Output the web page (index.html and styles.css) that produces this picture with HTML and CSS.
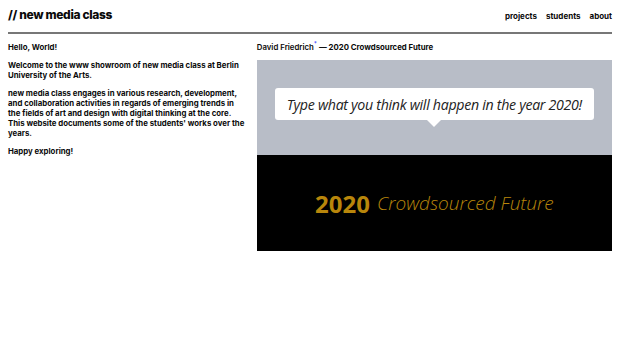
FILE: index.html
```html
<!DOCTYPE html>
<html lang="en">
<head>
  <meta charset="UTF-8" />
  <meta name="viewport" content="width=device-width, initial-scale=1.0"/>
  <title>new media class</title>
  <link rel="stylesheet" href="styles.css">
</head>
<body>
  <header class="site-header">
    <a class="logo" href="#">// new media class</a>
    <nav class="topnav" aria-label="Main menu">
      <a href="#">projects</a>
      <a href="#">students</a>
      <a href="#">about</a>
    </nav>
  </header>

  <main class="content">
    <section class="intro">
      <p>Hello, World!</p>
      <p>Welcome to the www showroom of new media class at Berlin University of the Arts.</p>
      <p>new media class engages in various research, development, and collaboration activities in regards of emerging trends in the fields of art and design with digital thinking at the core. This website documents some of the students' works over the years.</p>
      <p>Happy exploring!</p>
    </section>

    <section class="project">
      <p class="project-title">
        <span class="author">David Friedrich<sup>*</sup></span> — 2020 Crowdsourced Future
      </p>
      <div class="project-cover">
        <div class="cover-top">
          <div class="bubble">Type what you think will happen in the year 2020!</div>
        </div>
        <div class="cover-bottom">
          <span class="year">2020</span>
          <span class="subtitle">Crowdsourced Future</span>
        </div>
      </div>
    </section>
  </main>
</body>
</html>
```

FILE: styles.css
```css
:root {
  --ink: #0a0a0a;
  --rule: #777777;
  --gold: #b8860b;
}

body {
  font-family: 'Inter', 'Liberation Sans', sans-serif;
  color: var(--ink);
  background: #ffffff;
  margin: 0;
  padding: 0 8px;
}

a {
  color: inherit;
  text-decoration: none;
}

.site-header {
  display: flex;
  justify-content: space-between;
  align-items: baseline;
  padding: 7px 0 10px;
  border-bottom: 2px solid var(--rule);
}

.logo {
  font-size: 12px;
  font-weight: 800;
  letter-spacing: -0.35px;
}

.topnav {
  display: flex;
  gap: 9px;
  font-size: 8px;
  font-weight: 700;
}

.content {
  display: grid;
  grid-template-columns: 2fr 3fr;
  gap: 12px;
  padding-top: 8px;
}

.intro p,
.project-title {
  font-size: 7.8px;
  font-weight: 700;
  line-height: 10px;
  margin: 0 0 8px;
}

.author {
  font-weight: 600;
}

.author sup {
  color: #3344ff;
  font-size: 6px;
  line-height: 0;
}

.project-cover {
  display: flex;
  flex-direction: column;
  height: 191px;
  margin-top: 7px;
}

.cover-top {
  background: #b8bdc7;
  height: 95px;
  display: flex;
  justify-content: center;
  padding-top: 28px;
  box-sizing: border-box;
}

.bubble {
  position: relative;
  background: #ffffff;
  border-radius: 3px;
  height: 32px;
  padding: 0 12px;
  display: flex;
  align-items: center;
  font-family: 'Open Sans', sans-serif;
  font-style: italic;
  font-size: 14.2px;
  color: #222222;
  letter-spacing: -0.3px;
}

.bubble::after {
  content: "";
  position: absolute;
  left: 50%;
  bottom: -7px;
  margin-left: -7px;
  border-left: 7px solid transparent;
  border-right: 7px solid transparent;
  border-top: 7px solid #ffffff;
}

.cover-bottom {
  flex: 1;
  background: #000000;
  display: flex;
  justify-content: center;
  align-items: center;
  gap: 7px;
  color: var(--gold);
  font-family: 'Open Sans', sans-serif;
}

.year {
  font-size: 24px;
  font-weight: 700;
}

.subtitle {
  font-size: 19px;
  font-weight: 300;
  font-style: italic;
}
```
